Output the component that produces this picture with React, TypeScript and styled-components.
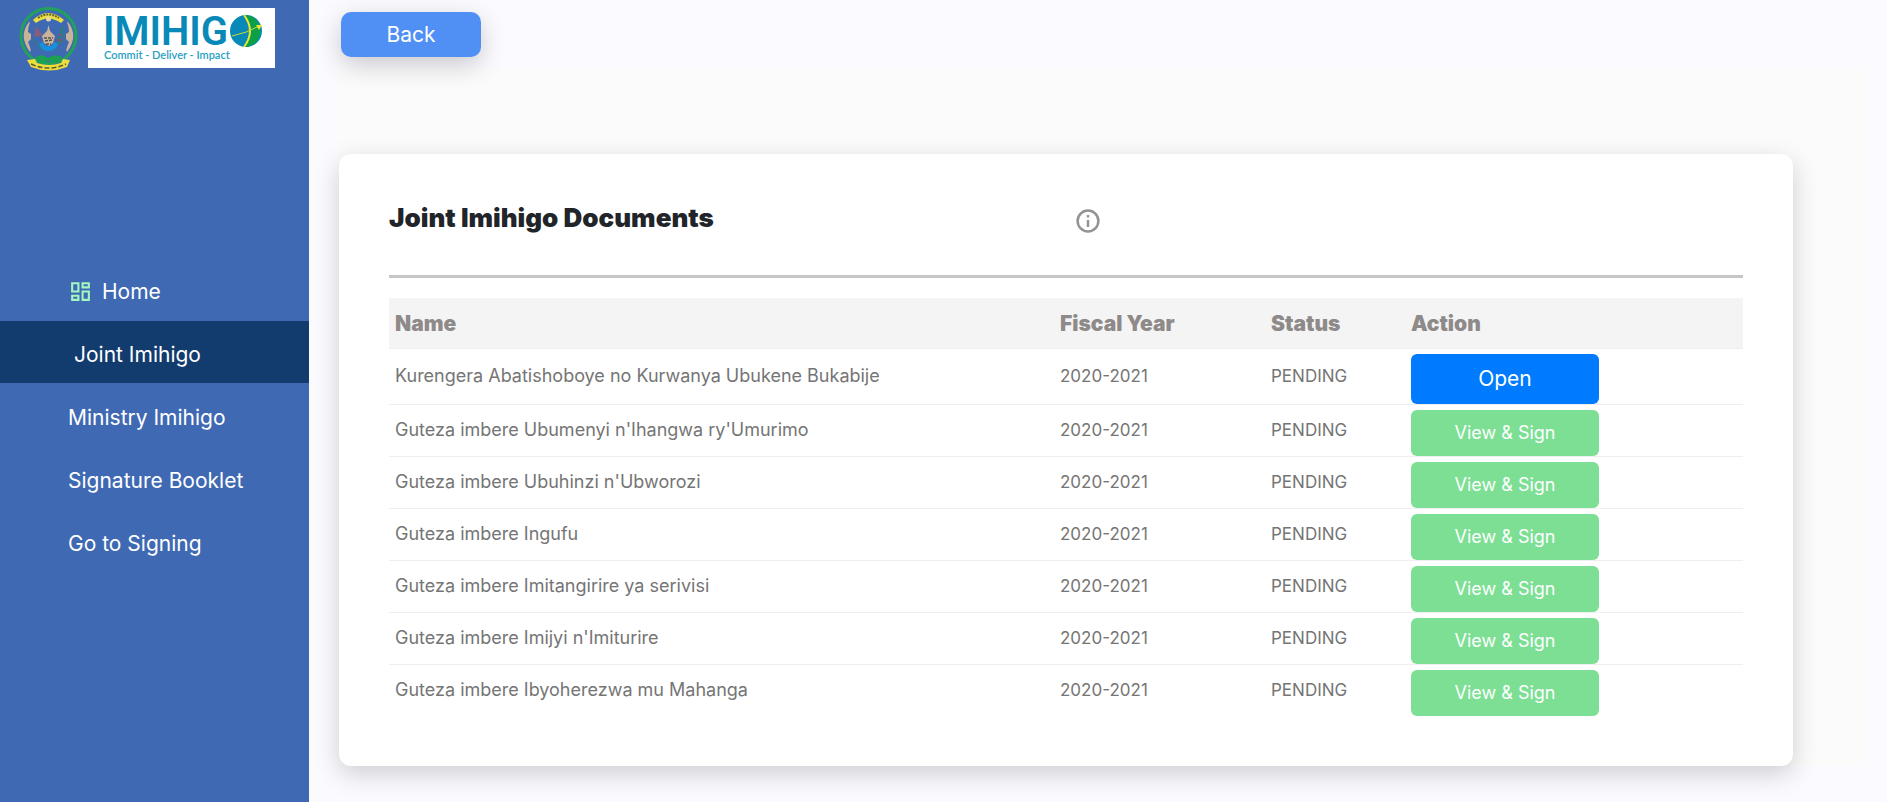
import React from 'react';
import styled, { createGlobalStyle, css } from 'styled-components';
import { MdOutlineDashboard } from 'react-icons/md';

const GlobalStyle = createGlobalStyle`
  *, *::before, *::after { box-sizing: border-box; }
  body {
    margin: 0;
    background: #fafaff;
    color: #212529;
    font-family: Inter, "Open Sans", sans-serif;
    font-size: 18px;
  }
  button { font-family: inherit; cursor: pointer; }
`;

const Page = styled.div`
  display: flex;
  min-height: 100vh;
`;

const Sidebar = styled.aside`
  flex: 0 0 309px;
  background: #3f69b3;
`;

const Brand = styled.div`
  display: flex;
  align-items: flex-start;
  gap: 8px;
  height: 258px;
  padding: 5px 18px;
`;

const EmblemSvg = styled.svg`
  width: 62px;
  height: 68px;
  flex: none;
`;

const LogoSvg = styled.svg`
  width: 187px;
  height: 60px;
  margin-top: 3px;
  flex: none;
  background: #fff;
`;

const Nav = styled.nav`
  display: flex;
  flex-direction: column;
  gap: 1px;
`;

const NavLink = styled.a<{ $active?: boolean }>`
  display: flex;
  align-items: center;
  gap: 9px;
  height: 62px;
  padding: 4px 20px 0 68px;
  color: #fff;
  font-size: 21px;
  text-decoration: none;

  svg {
    width: 25px;
    height: 25px;
    color: #a3f7bf;
  }

  ${({ $active }) =>
    $active &&
    css`
      padding-left: 74px;
      background: #123c6d;
    `}
`;

const Main = styled.main`
  flex: 1;
  min-width: 0;
  padding: 12px 19px 36px 30px;
`;

const TopBar = styled.header`
  display: flex;
  height: 58px;
  padding-left: 2px;
`;

const BackButton = styled.button`
  position: relative;
  width: 140px;
  height: 45px;
  padding: 0;
  border: 0;
  border-radius: 10px;
  background: #5090f5;
  box-shadow: 0 8px 26px rgba(0, 0, 0, 0.2);
  color: #fff;
  font-size: 21px;
`;

const Content = styled.section`
  padding: 84px 75px 0 0;
  background: #fbfbfb;
`;

const Card = styled.div`
  padding: 50px;
  border-radius: 12px;
  background: #fff;
  box-shadow: 0 8px 26px rgba(0, 0, 0, 0.18);
`;

const CardHeader = styled.div`
  display: grid;
  grid-template-columns: 1fr 1fr;
  padding-bottom: 40px;
`;

const Title = styled.h1`
  margin: 0;
  font-size: 26px;
  font-weight: 900;
  line-height: 28px;
`;

const InfoButton = styled.button`
  display: flex;
  justify-self: start;
  margin-left: 8px;
  padding: 3px 0 0;
  border: 0;
  background: none;
  color: #939393;

  svg {
    width: 28px;
    height: 28px;
  }
`;

const Divider = styled.hr`
  height: 3px;
  margin: 0 0 20px;
  border: 0;
  background: #c6c6c6;
`;

const Table = styled.table`
  width: 100%;
  table-layout: fixed;
  border-collapse: separate;
  border-spacing: 0;
`;

const Col = styled.col<{ $width?: number }>`
  width: ${({ $width }) => ($width ? `${$width}px` : 'auto')};
`;

const HeadCell = styled.th`
  height: 50px;
  padding: 0 6px;
  background: #f4f4f4;
  color: #8f8a8a;
  font-size: 21px;
  font-weight: 900;
  text-align: left;
`;

const Cell = styled.td<{ $small?: boolean }>`
  padding: 0 6px 2px;
  border-top: 1px solid #efefef;
  color: #757575;
  font-size: ${({ $small }) => ($small ? '17px' : '18px')};
`;

const ActionCell = styled(Cell)`
  padding: 5px 6px 0;
`;

const ActionButton = styled.button<{ $primary?: boolean }>`
  display: block;
  width: 188px;
  height: ${({ $primary }) => ($primary ? '50px' : '46px')};
  padding: 0 0 2px;
  border: 0;
  border-radius: 6px;
  background: ${({ $primary }) => ($primary ? '#007bff' : '#7cdf94')};
  color: #fff;
  font-size: ${({ $primary }) => ($primary ? '21px' : '18px')};
`;

const documents = [
  'Kurengera Abatishoboye no Kurwanya Ubukene Bukabije',
  "Guteza imbere Ubumenyi n'Ihangwa ry'Umurimo",
  "Guteza imbere Ubuhinzi n'Ubworozi",
  'Guteza imbere Ingufu',
  'Guteza imbere Imitangirire ya serivisi',
  "Guteza imbere Imijyi n'Imiturire",
  'Guteza imbere Ibyoherezwa mu Mahanga',
].map((name, index) => ({ name, year: '2020-2021', status: 'PENDING', open: index === 0 }));

function Emblem() {
  return (
    <EmblemSvg viewBox="0 0 62 68" role="img" aria-label="Coat of arms">
      <circle cx="30.500" cy="31" r="27.500" fill="none" stroke="#21a15c" strokeWidth="3" />
      {/* scroll along the top */}
      <path d="M15 15Q30 1 46 15L43 18Q30 9 18 18Z" fill="#ecdf3b" />
      <path d="M20 13Q30 6 41 13" fill="none" stroke="#5d6534" strokeWidth="2" strokeDasharray="2 1" />
      {/* shields on both sides */}
      <path d="M11 17Q0 31 12 47Q14 46 10 37L13 34V29L10 27Q10 22 12 17Z" fill="#c9b49a" />
      <path d="M50 17Q61 31 49 47Q47 46 51 37L48 34V29L51 27Q51 22 49 17Z" fill="#c9b49a" />
      {/* sun, sorghum and coffee */}
      <circle cx="30.500" cy="14" r="2.500" fill="#e5d9a6" />
      <path d="M18 21L24 29V31L16 32Z" fill="#885d78" />
      <path d="M15 34Q20 42 26 46M43 22Q43 38 35 46M46 22L42 30M47 28L40 34M47 34L38 40" fill="none" stroke="#278b5a" strokeWidth="1" />
      <path d="M42 29V31M40 34V36M38 39V41M43 34V36" stroke="#b33e52" strokeWidth="1.500" />
      {/* cog wheel and basket */}
      <path d="M23 38A8 9 0 0 0 38 38" fill="none" stroke="#1791df" strokeWidth="4.500" />
      <path d="M30.500 20L32 26L37 31L35 38L31 41L26 38L24 31L29 26Z" fill="#c9b49a" />
      <path d="M26 33H35M27 36L34 35M28 39H33" stroke="#53534d" strokeWidth="1.500" strokeDasharray="3 1" />
      {/* knot and lower scroll */}
      <path d="M17 52Q24 48 30 53Q37 48 44 52L40 58L31 56L22 58Z" fill="#1ca052" />
      <path d="M9 55L17 54L19 58Q31 62 43 58L45 54L52 55L49 62Q31 69 13 62Z" fill="#ecdf3b" />
      <path d="M13 59Q31 67 48 59" fill="none" stroke="#625e36" strokeWidth="1.500" strokeDasharray="5 2" />
    </EmblemSvg>
  );
}

function ImihigoLogo() {
  return (
    <LogoSvg viewBox="0 0 187 60" role="img" aria-label="Imihigo">
      <text x="15" y="37" fill="#0889b8" fontFamily="Roboto, sans-serif" fontSize="40" fontWeight="600">
        IMIHIG
      </text>
      <text x="16" y="51" fill="#299fc4" fontFamily="Lato, sans-serif" fontSize="11" fontWeight="600">
        Commit - Deliver - Impact
      </text>
      <circle cx="158" cy="23" r="16" fill="#0889b8" />
      <path d="M157 7A16 16 0 1 1 156 39Q169 23 157 7Z" fill="#0b9f48" />
      <path d="M156 7Q168 23 156 39" fill="none" stroke="#eee52e" strokeWidth="2" />
      <path d="M144 28Q159 25 171 18" fill="none" stroke="#cddb31" strokeWidth="1" />
      <path d="M168 17L174 17L171 22Z" fill="#eee52e" />
    </LogoSvg>
  );
}

function InfoIcon() {
  return (
    <svg viewBox="0 0 28 28" fill="none" stroke="currentColor" aria-hidden>
      <circle cx="14" cy="14" r="10.400" strokeWidth="2.500" />
      <path d="M14 13V20M14 8V10.500" strokeWidth="2.500" />
    </svg>
  );
}

export default function App() {
  return (
    <>
      <GlobalStyle />
      <Page>
        <Sidebar>
          <Brand>
            <Emblem />
            <ImihigoLogo />
          </Brand>
          <Nav>
            <NavLink href="#home">
              <MdOutlineDashboard aria-hidden />
              Home
            </NavLink>
            <NavLink href="#joint" $active aria-current="page">
              Joint Imihigo
            </NavLink>
            <NavLink href="#ministry">Ministry Imihigo</NavLink>
            <NavLink href="#booklet">Signature Booklet</NavLink>
            <NavLink href="#signing">Go to Signing</NavLink>
          </Nav>
        </Sidebar>
        <Main>
          <TopBar>
            <BackButton type="button">Back</BackButton>
          </TopBar>
          <Content>
            <Card>
              <CardHeader>
                <Title>Joint Imihigo Documents</Title>
                <InfoButton type="button" aria-label="Information">
                  <InfoIcon />
                </InfoButton>
              </CardHeader>
              <Divider />
              <Table>
                <colgroup>
                  <Col />
                  <Col $width={211} />
                  <Col $width={140} />
                  <Col $width={338} />
                </colgroup>
                <thead>
                  <tr>
                    <HeadCell scope="col">Name</HeadCell>
                    <HeadCell scope="col">Fiscal Year</HeadCell>
                    <HeadCell scope="col">Status</HeadCell>
                    <HeadCell scope="col">Action</HeadCell>
                  </tr>
                </thead>
                <tbody>
                  {documents.map((doc) => (
                    <tr key={doc.name}>
                      <Cell>{doc.name}</Cell>
                      <Cell $small>{doc.year}</Cell>
                      <Cell $small>{doc.status}</Cell>
                      <ActionCell>
                        <ActionButton type="button" $primary={doc.open}>
                          {doc.open ? 'Open' : 'View & Sign'}
                        </ActionButton>
                      </ActionCell>
                    </tr>
                  ))}
                </tbody>
              </Table>
            </Card>
          </Content>
        </Main>
      </Page>
    </>
  );
}
